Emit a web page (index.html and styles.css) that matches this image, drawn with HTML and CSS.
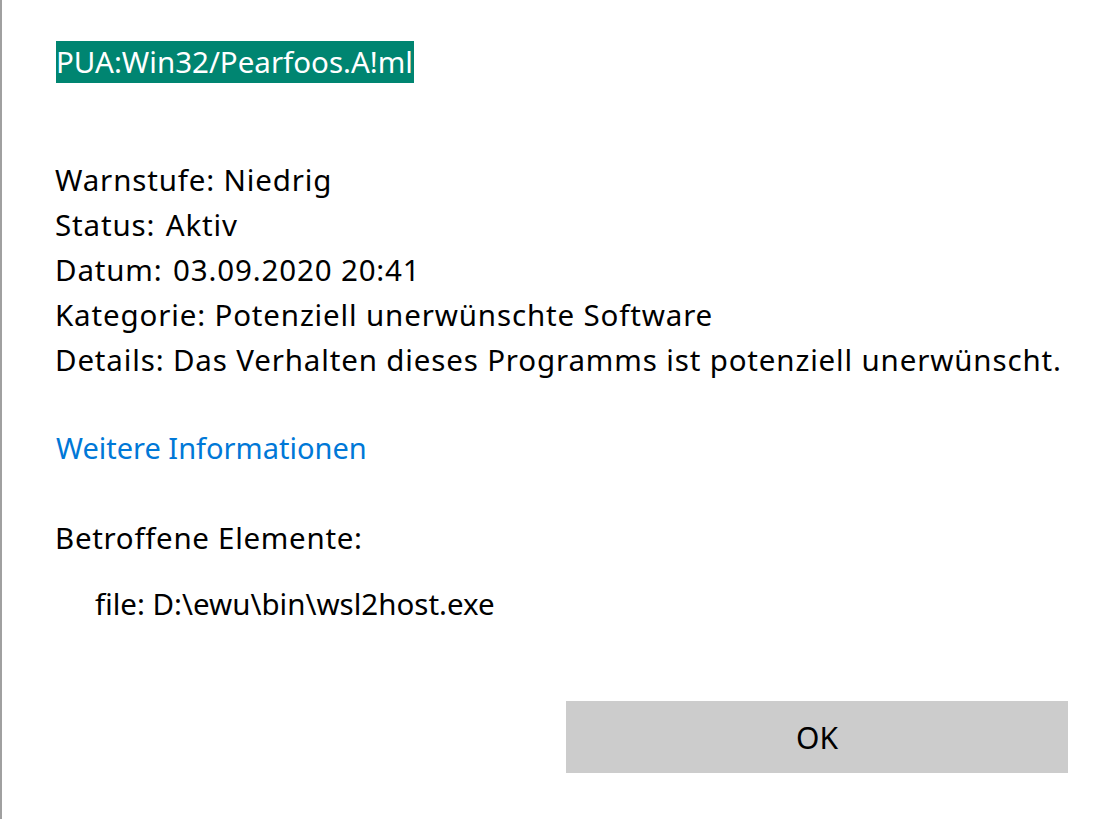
FILE: index.html
```html
<!DOCTYPE html>
<html lang="de">
<head>
<meta charset="utf-8">
<title>PUA:Win32/Pearfoos.A!ml</title>
<link rel="stylesheet" href="styles.css">
</head>
<body>
<div class="dialog">
  <div class="content">
    <h1 class="title"><span class="sel">PUA:Win32/Pearfoos.A!ml</span></h1>
    <div class="props">
      <div class="row">Warnstufe: Niedrig</div>
      <div class="row">Status: <span class="gap">Aktiv</span></div>
      <div class="row">Datum: <span class="gap">03.09.2020 20:41</span></div>
      <div class="row">Kategorie: Potenziell unerwünschte Software</div>
      <div class="row">Details: Das Verhalten dieses Programms ist potenziell unerwünscht.</div>
    </div>
    <a class="link" href="#">Weitere Informationen</a>
    <div class="section">Betroffene Elemente:</div>
    <div class="item">file: D:\ewu\bin\wsl2host.exe</div>
  </div>
  <div class="actions">
    <button class="ok">OK</button>
  </div>
</div>
</body>
</html>
```
FILE: styles.css
```css
html, body {
  margin: 0;
  padding: 0;
  background: #fff;
}
body {
  font-family: "Noto Sans", "Open Sans", sans-serif;
  color: #000;
}
.dialog {
  box-sizing: border-box;
  width: 1118px;
  height: 819px;
  border-left: 2px solid #a0a0a0;
  display: flex;
  flex-direction: column;
}
.content {
  padding: 41px 0 0 53px;
  flex: 1;
  display: flex;
  flex-direction: column;
  align-items: flex-start;
}
.title {
  margin: 0 0 0 1px;
  font-weight: normal;
  font-size: 29.5px;
  line-height: 42px;
}
.sel {
  background: #008571;
  color: #fff;
  display: inline-block;
  padding-right: 1px;
}
.props {
  margin-top: 74px;
  font-size: 29.5px;
  letter-spacing: 0.85px;
  line-height: 45px;
}
.gap {
  margin-left: 2px;
}
.link {
  margin-top: 43px;
  margin-left: 1px;
  font-size: 29px;
  line-height: 45px;
  color: #0078d7;
  text-decoration: none;
}
.section {
  margin-top: 45px;
  font-size: 29.5px;
  letter-spacing: 0.7px;
  line-height: 45px;
}
.item {
  margin-top: 21px;
  padding-left: 40px;
  font-size: 29.5px;
  line-height: 45px;
}
.actions {
  display: flex;
  justify-content: flex-end;
  padding: 0 50px 46px 0;
}
.ok {
  width: 502px;
  height: 72px;
  border: none;
  background: #cccccc;
  font-family: inherit;
  font-size: 30px;
  color: #000;
}
```
